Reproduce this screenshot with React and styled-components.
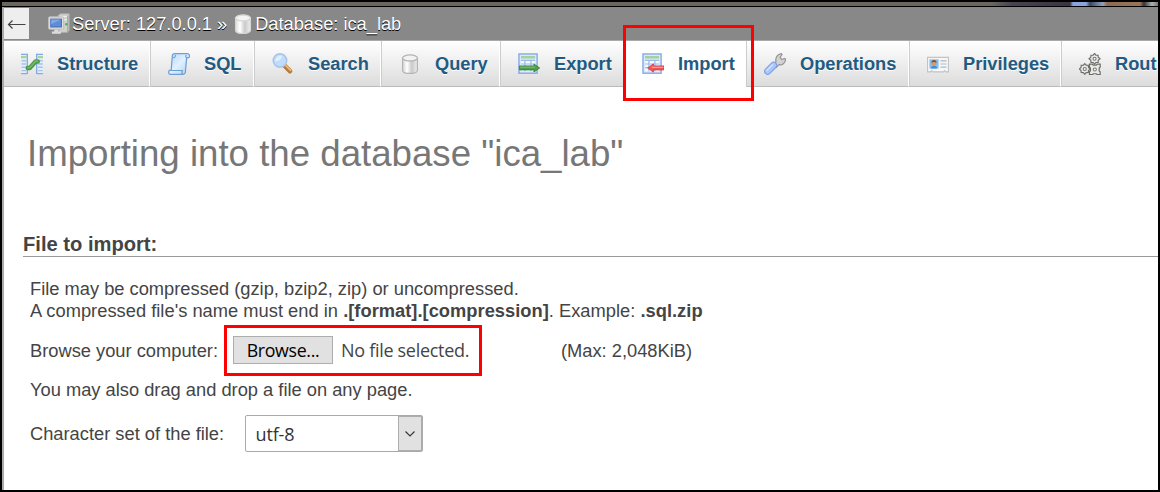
import React from "react";
import styled, { createGlobalStyle } from "styled-components";

const GlobalStyle = createGlobalStyle`
  * { box-sizing: border-box; }
  body { margin: 0; background: #fff; font-family: "Liberation Sans", Arial, sans-serif; }
`;

const Frame = styled.div`
  position: relative;
  width: 1160px;
  height: 492px;
  border: 2px solid #000;
  background: #fff;
  overflow: hidden;
  display: flex;
  flex-direction: column;
`;

const WindowStrip = styled.div`
  flex: none;
  height: 5px;
  border-bottom: 1px solid #000;
  background: linear-gradient(90deg, #6b655e 0, #6b655e 990px, #4a4350 1010px, #3a3540 1068px,
    #8ba3e0 1071px, #8ba3e0 1084px, #3c4560 1088px, #93a3bd 1101px, #8e6a52 1105px, #9a7458 1138px, #333 1142px, #a9b5b0 1150px, #777 1156px);
`;

const Page = styled.div`
  flex: 1;
  min-height: 0;
  border-left: 2px solid #aaa;
  display: flex;
  flex-direction: column;
`;

const Breadcrumb = styled.header`
  flex: none;
  height: 33px;
  display: flex;
  align-items: center;
  background: #888;
  color: #fff;
  font-size: 18.25px;
  line-height: 22px;
  white-space: pre;
  text-shadow: 0 1px 0 #000;
`;

const BackButton = styled.div`
  width: 25px;
  height: 31px;
  margin-right: 19px;
  align-self: flex-start;
  margin-top: 1px;
  background: #eee;
  display: flex;
  align-items: center;
  justify-content: center;
`;

const Crumb = styled.span`
  margin-left: ${(p) => p.$gap || 0}px;
`;

const Tabs = styled.nav`
  flex: none;
  height: 47px;
  display: flex;
  border-top: 1px solid #aaa;
  overflow: hidden;
`;

const TabItem = styled.a`
  flex: none;
  width: ${(p) => p.$width}px;
  padding-left: 17px;
  display: flex;
  align-items: center;
  gap: 14px;
  border-left: ${(p) => (p.$first ? "0" : "1px solid " + (p.$active ? "#fff" : "#ccc"))};
  border-right: 1px solid #fff;
  border-bottom: 1px solid ${(p) => (p.$active ? "#fff" : "#bbb")};
  background: ${(p) => (p.$active ? "#fff" : "linear-gradient(#fff, #dcdcdc)")};
  color: #235a81;
  font-size: 18.25px;
  font-weight: bold;
  line-height: 22px;
  text-shadow: 0 1px 0 #fff;
  white-space: nowrap;
`;

const Icon = styled.svg`
  flex: none;
  display: block;
`;

const Content = styled.main`
  padding: 43px 0 0 19px;
  color: #444;
  font-size: 18.3px;
  line-height: 22px;
  white-space: nowrap;
`;

const Title = styled.h1`
  margin: 0 0 0 4px;
  color: #777;
  font-size: 36.65px;
  font-weight: normal;
  line-height: 48px;
`;

const SectionHeading = styled.h2`
  margin: 54px 0 0;
  height: 25px;
  border-bottom: 1px solid #999;
  font-size: 20.15px;
  line-height: 24px;
`;

const Body = styled.div`
  padding: 21px 0 0 7px;
`;

const Line = styled.div`
  letter-spacing: ${(p) => p.$track || 0}px;
`;

const UploadRow = styled.div`
  display: flex;
  align-items: center;
  height: 28px;
  margin-top: 14px;
`;

const Label = styled.label`
  width: ${(p) => p.$width}px;
  padding-top: ${(p) => p.$drop || 0}px;
`;

const SizeLimit = styled.span`
  padding-top: 2px;
`;

const BrowseButton = styled.button`
  width: 100px;
  height: 28px;
  padding: 0;
  border: 1px solid #adadad;
  background: #e1e1e1;
  color: #000;
  font: 17.8px/24px "Open Sans", sans-serif;
  letter-spacing: -0.35px;
`;

const FileStatus = styled.span`
  width: 220px;
  margin-left: 8px;
  font: 18px/24px "Open Sans", sans-serif;
  letter-spacing: -0.3px;
`;

const DropHint = styled.div`
  margin-top: 15px;
`;

const CharsetRow = styled.div`
  display: flex;
  align-items: center;
  height: 37px;
  margin-top: 14px;
`;

const Select = styled.div`
  width: 178px;
  height: 37px;
  display: flex;
  border: 1px solid #aaa;
  border-radius: 2px;
  color: #333;
  font: 18px/36px "Open Sans", sans-serif;
  letter-spacing: -0.15px;
`;

const SelectValue = styled.span`
  flex: 1;
  padding-left: 9.5px;
`;

const SelectArrow = styled.span`
  width: 24px;
  border: 1px solid #adadad;
  background: #e1e1e1;
  display: flex;
  align-items: center;
  justify-content: center;
`;

const Highlight = styled.div`
  position: absolute;
  left: ${(p) => p.$x}px;
  top: ${(p) => p.$y}px;
  width: ${(p) => p.$w}px;
  height: ${(p) => p.$h}px;
  border: 3px solid #f00;
  pointer-events: none;
`;

const Cylinder = ({ id, light }) => (
  <>
    <defs>
      <linearGradient id={id}>
        <stop offset="0" stopColor={light ? "#ddd" : "#d2d2d2"} />
        <stop offset=".3" stopColor="#fff" />
        <stop offset=".62" stopColor="#c9c9c9" />
        <stop offset="1" stopColor="#eee" />
      </linearGradient>
    </defs>
    <path d="M2.6 3.6v8.9c0 3.2 10.8 3.2 10.8 0V3.6z" fill={"url(#" + id + ")"} stroke={light ? "#d5d5d5" : "#b4b4b4"} strokeWidth=".9" />
    <ellipse cx="8" cy="3.6" rx="5.4" ry="2.2" fill="#f3f3f3" stroke={light ? "#d5d5d5" : "#b4b4b4"} strokeWidth=".9" />
  </>
);

const Sheet = () => (
  <>
    <rect x=".7" y=".7" width="13.2" height="14" fill="#dbe8fd" stroke="#83a9e6" />
    <rect x="2.2" y="2.2" width="10.2" height="1.8" fill="#a3d29c" />
    <rect x="2.2" y="5.2" width="10.2" height="8" fill="#f4f8ff" />
    <path d="M2.2 5.4h10.2M2.2 8h10.2M2.2 10.6h10.2M5 5.2v8M9.4 5.2v8" stroke="#9dbbe9" strokeWidth=".9" />
  </>
);

const gear = (x, y) => (
  <g transform={"translate(" + x + " " + y + ")"}>
    <path d="M0-3.9l1 1.2 1.6.1.1 1.5L4 0 2.7 1.1l-.1 1.5-1.6.1L0 3.9l-1-1.2-1.6-.1-.1-1.5L-4 0l1.3-1.1.1-1.5 1.6-.1z" fill="#e9e9e5" stroke="#70706b" strokeWidth=".85" />
    <circle r="1.1" fill="#fff" stroke="#777" strokeWidth=".8" />
  </g>
);

const glyphs = {
  structure: (
    <>
      <path d="M0 .5h4.6v14.8H0zM11.4.5H16v14.8h-4.6z" fill="#e4eefc" />
      <path d="M4.6.5v14.8M11.4.5v14.8" stroke="#84abe4" />
      <path d="M0 1h4.6M11.4 1H16M0 15h4.6M11.4 15H16" stroke="#84abe4" strokeWidth=".8" />
      <path d="M0 3h4M12.2 3H16" stroke="#a5d59b" strokeWidth="1.7" />
      <path d="M.4 5.6h3.3M.4 8h3.3M.4 10.4h3.3M.4 12.8h3.3M12.5 5.6h3.3M12.5 8h3.3M12.5 10.4h3.3M12.5 12.8h3.3" stroke="#a8c1e5" />
      <path d="M4.9 10.9h1.5l4.2-4.7h1.6" fill="none" stroke="#4a9746" strokeWidth="3.2" strokeLinejoin="round" strokeLinecap="round" />
      <path d="M5.1 10.7h1.4l4.1-4.7h1.4" fill="none" stroke="#72b767" strokeWidth="1.3" strokeLinecap="round" />
    </>
  ),
  sql: (
    <>
      <defs>
        <linearGradient id="scroll" x2="1" y2="1">
          <stop offset="0" stopColor="#b8d7f8" />
          <stop offset=".5" stopColor="#e0f0ff" />
          <stop offset="1" stopColor="#acd1f4" />
        </linearGradient>
      </defs>
      <path d="M3.2 1.5c.3-.8 1-1 1.7-1h9c1.6 0 2.2 1.6 1.3 2.9h-1.6l-.9 9.3c.2 1.6-.6 2.8-1.8 2.8H1.7C.3 15.5.3 13.8.9 12.7h1.4z" fill="url(#scroll)" stroke="#6d9fd2" strokeWidth=".9" />
      <path d="M3.6 3.4c1.3.2 2-.8 1.7-2M13.6 3.4c-.9-.3-1-1.5-.1-2M2.4 12.7h8.1c-.6 1.1-.3 2.2.3 2.7" fill="none" stroke="#6d9fd2" strokeWidth=".8" />
    </>
  ),
  search: (
    <>
      <path d="M9.3 9.3l3.8 3.9" stroke="#b87938" strokeWidth="3.4" strokeLinecap="round" />
      <path d="M9.8 8.9l3.7 3.7" stroke="#edbd80" strokeWidth="1.2" strokeLinecap="round" />
      <circle cx="5.8" cy="5.5" r="4.9" fill="#bedcfb" stroke="#a9c3e7" strokeWidth="1.1" />
      <path d="M2.4 6.2a4 4 0 0 1 5.2-4.1C7 4.1 5.1 5.8 2.4 6.2z" fill="#e0f0ff" />
    </>
  ),
  query: <Cylinder id="querycyl" />,
  export: (
    <>
      <Sheet />
      <path d="M1 9.4h10.6V8L15.8 10.9l-4.2 2.9v-1.5H1z" fill="#4d9f49" stroke="#397d36" strokeWidth=".6" />
      <path d="M1.4 10.3h11" stroke="#85c47e" strokeWidth=".7" />
    </>
  ),
  import: (
    <>
      <Sheet />
      <path d="M15.9 9.4H8.3V7.9L4.1 10.9l4.2 3v-1.6h7.6z" fill="#f05555" stroke="#d83c3c" strokeWidth=".6" />
      <path d="M7 10.4h8.4" stroke="#ffaaa5" strokeWidth=".8" />
    </>
  ),
  operations: (
    <>
      <path d="M7 8.5l1.7-2C8.1 3.4 9.7.8 12.5.5l.6.7-1.4 2 1.3 1.6 2-.9.7.6c-.2 2.9-2.5 4.5-4.8 4L9 10.5z" fill="#d3d3d3" stroke="#969696" strokeWidth=".9" />
      <path d="M2.7 13.3l4.3-4.3" stroke="#7c9edb" strokeWidth="5.2" strokeLinecap="round" />
      <path d="M2.7 13.2l4.3-4.3" stroke="#a9c6fb" strokeWidth="3.8" strokeLinecap="round" />
      <path d="M2.1 12.7l4.2-4.1" stroke="#d2e2ff" strokeWidth="1" strokeLinecap="round" />
    </>
  ),
  privileges: (
    <>
      <path d="M.4 3.2h15.2v10.5h-2l-.8-.9-.8.9H4.2l-.8-.9-.8.9H.4z" fill="#f7f7f7" stroke="#c3c3c3" strokeWidth=".8" />
      <rect x="1.8" y="4.6" width="6.6" height="6.7" fill="#83bcf0" />
      <circle cx="5.1" cy="7.4" r="1.8" fill="#d99a65" />
      <path d="M3.2 7c0-2.6 3.8-2.6 3.8 0L5 6.3z" fill="#77502c" />
      <path d="M2.8 11.2c.3-2.6 4.3-2.6 4.6 0z" fill="#468bd0" />
      <path d="M9.8 5.7h4.4M9.8 8h4.4M9.8 10.2h4.4" stroke="#a9b9c9" strokeWidth=".9" />
    </>
  ),
  routines: (
    <>
      {gear(11.3, 4.2)}
      {gear(4.2, 11.6)}
      <path d="M7.6 8.1h2.2l.6.7h2.2l.6-.7h2.2v2.2l-.7.6v2.1l.7.6v2.1h-2.2l-.6-.6h-2.2l-.6.6H7.6v-2.1l.7-.6v-2.1l-.7-.6z" fill="#e9e9e5" stroke="#6c6c67" strokeWidth=".85" />
      <circle cx="11.5" cy="12" r="1.1" fill="#fff" stroke="#777" strokeWidth=".8" />
    </>
  ),
  server: (
    <>
      <path d="M7.4 1.7L9.2.5h6.2v12.1l-1.2 1.5H8z" fill="#d0d0cd" stroke="#aaa" strokeWidth=".6" />
      <path d="M9 2.6h4.7M11 4.8h2.7" stroke="#efefef" />
      <path d="M14.4 2v11.8" stroke="#999" strokeWidth=".7" />
      <circle cx="13.3" cy="8.2" r=".9" fill="#34c437" />
      <rect x=".4" y="2.8" width="11" height="9" rx=".8" fill="#dcdcd9" stroke="#bcbcbc" strokeWidth=".7" />
      <rect x="2" y="4.4" width="7.8" height="5.8" fill="#5f8cd8" stroke="#3865b5" strokeWidth=".6" />
      <path d="M2.3 8.1V4.8h7.2z" fill="#83a6e6" />
      <path d="M4.6 12h3v1.5h1.8v1.6H2.8v-1.6h1.8z" fill="#dcdcd9" />
    </>
  ),
  database: <Cylinder id="dbcyl" light />,
};

const Glyph = ({ name, size = 22 }) => (
  <Icon width={size} height={size} viewBox="0 0 16 16" aria-hidden="true">
    {glyphs[name]}
  </Icon>
);

const tabs = [
  { name: "structure", label: "Structure", width: 146 },
  { name: "sql", label: "SQL", width: 104 },
  { name: "search", label: "Search", width: 127 },
  { name: "query", label: "Query", width: 119 },
  { name: "export", label: "Export", width: 124 },
  { name: "import", label: "Import", width: 122, active: true },
  { name: "operations", label: "Operations", width: 163 },
  { name: "privileges", label: "Privileges", width: 152 },
  { name: "routines", label: "Rout", width: 160 },
];

export default function App() {
  return (
    <>
      <GlobalStyle />
      <Frame>
        <WindowStrip />
        <Page>
          <Breadcrumb>
            <BackButton>
              <svg width="19" height="10" viewBox="0 0 19 10" fill="none" stroke="#444" strokeWidth="1.2">
                <path d="M18.5 5.5H1.5M5.5 1.5L1.5 5.5l4 4" />
              </svg>
            </BackButton>
            <Glyph name="server" />
            <Crumb $gap={2}>Server: 127.0.0.1</Crumb>
            <Crumb $gap={5}>»</Crumb>
            <Crumb $gap={4.5}>
              <Glyph name="database" />
            </Crumb>
            <Crumb $gap={1.5}>Database: ica_lab</Crumb>
          </Breadcrumb>
          <Tabs>
            {tabs.map((t, i) => (
              <TabItem key={t.name} $width={t.width} $first={i === 0} $active={t.active}>
                <Glyph name={t.name} />
                {t.label}
              </TabItem>
            ))}
          </Tabs>
          <Content>
            <Title>Importing into the database "ica_lab"</Title>
            <SectionHeading>File to import:</SectionHeading>
            <Body>
              <Line>File may be compressed (gzip, bzip2, zip) or uncompressed.</Line>
              <Line $track={0.02}>
                A compressed file's name must end in <b>.[format].[compression]</b>. Example: <b>.sql.zip</b>
              </Line>
              <UploadRow>
                <Label $width={203} $drop={2}>Browse your computer:</Label>
                <BrowseButton>Browse...</BrowseButton>
                <FileStatus>No file selected.</FileStatus>
                <SizeLimit>(Max: 2,048KiB)</SizeLimit>
              </UploadRow>
              <DropHint>You may also drag and drop a file on any page.</DropHint>
              <CharsetRow>
                <Label $width={215} $drop={1}>Character set of the file:</Label>
                <Select>
                  <SelectValue>utf-8</SelectValue>
                  <SelectArrow>
                    <svg width="10" height="6" viewBox="0 0 10 6" fill="none" stroke="#333" strokeWidth="1.1">
                      <path d="M.5.5L5 5 9.5.5" />
                    </svg>
                  </SelectArrow>
                </Select>
              </CharsetRow>
            </Body>
          </Content>
        </Page>
        <Highlight $x={621} $y={23} $w={131} $h={76} />
        <Highlight $x={222} $y={323} $w={258} $h={51} />
      </Frame>
    </>
  );
}
